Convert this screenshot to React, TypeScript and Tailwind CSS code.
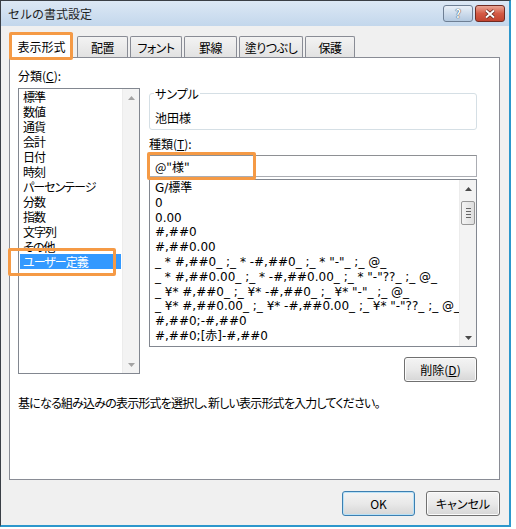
import React from "react";

const categories = [
  "標準",
  "数値",
  "通貨",
  "会計",
  "日付",
  "時刻",
  "パーセンテージ",
  "分数",
  "指数",
  "文字列",
  "その他",
  "ユーザー定義",
];

const formats = [
  "G/標準",
  "0",
  "0.00",
  "#,##0",
  "#,##0.00",
  '_ * #,##0_ ;_ * -#,##0_ ;_ * "-"_ ;_ @_ ',
  '_ * #,##0.00_ ;_ * -#,##0.00_ ;_ * "-"??_ ;_ @_ ',
  '_ ¥* #,##0_ ;_ ¥* -#,##0_ ;_ ¥* "-"_ ;_ @_ ',
  '_ ¥* #,##0.00_ ;_ ¥* -#,##0.00_ ;_ ¥* "-"??_ ;_ @_ ',
  "#,##0;-#,##0",
  "#,##0;[赤]-#,##0",
];

const Arrow = ({ up, color }: { up?: boolean; color: string }) => (
  <svg width="7" height="4" viewBox="0 0 7 4">
    <path d={up ? "M0 4 L3.5 0 L7 4 Z" : "M0 0 L3.5 4 L7 0 Z"} fill={color} />
  </svg>
);

const Button = ({
  children,
  primary,
  className = "",
}: {
  children: React.ReactNode;
  primary?: boolean;
  className?: string;
}) => (
  <div
    className={`h-[25px] flex items-center justify-center rounded-[3px] border bg-linear-to-b from-[#f4f4f4] via-[#e9e9e9] to-[#d6d6d6] text-[12px] text-black ${
      primary
        ? "border-[#3c7fb1] shadow-[inset_0_0_0_1px_#b8e1f7]"
        : "border-[#707070] shadow-[inset_0_0_0_1px_#fbfbfb]"
    } ${className}`}
  >
    {children}
  </div>
);

const tabClass =
  "h-[21px] flex items-center justify-center bg-linear-to-b from-[#f3f3f3] to-[#e2e2e2] border border-b-0 border-[#898c95] rounded-t-[2px] tracking-[-0.5px]";

const App = () => {
  return (
    <div className="w-[516px] h-[529px] bg-white font-['Noto_Sans_CJK_JP','Noto_Sans',sans-serif] text-black">
      <div className="w-[511px] h-[527px] flex flex-col border-l border-t border-[#3a3f46] border-r-2 border-r-[#2c97cc] border-b-2 border-b-[#2c97cc] bg-[#f0f0f0]">
        {/* Title bar */}
        <div className="h-[25px] flex items-start bg-linear-to-b from-[#dce8f5] to-[#c3d7ec]">
          <div className="pl-[7px] h-[25px] flex items-center text-[12px] leading-[15px] text-[#1e1e1e]">
            セルの書式設定
          </div>
          <div className="ml-auto mt-[4px] mr-[4px] flex gap-[2px]">
            <div className="w-[30px] h-[17px] flex items-center justify-center rounded-[3px] border border-[#6e7f94] bg-linear-to-b from-[#e9f0f8] to-[#b4c9e0] text-[11px] leading-none font-bold text-white [text-shadow:0_0_1px_#2d3b4b,0_0_1px_#2d3b4b]">
              ?
            </div>
            <div className="w-[30px] h-[17px] flex items-center justify-center rounded-[3px] border border-[#6f2b22] bg-linear-to-b from-[#e9a696] via-[#d45a45] to-[#c2432f]">
              <svg width="12" height="10" viewBox="0 0 12 10">
                <path d="M2 1.5 L10 8.5 M10 1.5 L2 8.5" stroke="#5a1f17" strokeWidth="3.4" />
                <path d="M2 1.5 L10 8.5 M10 1.5 L2 8.5" stroke="#ffffff" strokeWidth="2" />
              </svg>
            </div>
          </div>
        </div>

        {/* Body */}
        <div className="flex-1 flex flex-col pl-[8px] pr-[9px] pt-[7px] [font-feature-settings:'palt'] text-[12px] leading-[15px]">
          {/* Tabs */}
          <div className="relative h-[24px] flex items-end">
            <div className="relative z-10 -mb-px ml-[1px] w-[63px] h-[25px] flex items-center justify-center bg-white border border-b-0 border-[#898c95] rounded-t-[2px]">
              表示形式
            </div>
            <div className={`ml-[4px] w-[51px] ${tabClass}`}>配置</div>
            <div className={`ml-[2px] w-[52px] ${tabClass}`}>フォント</div>
            <div className={`ml-[2px] w-[53px] ${tabClass}`}>罫線</div>
            <div className={`ml-[2px] w-[64px] ${tabClass}`}>塗りつぶし</div>
            <div className={`ml-[2px] w-[50px] ${tabClass}`}>保護</div>
            {/* annotation */}
            <div className="absolute z-20 left-0 top-[-1px] w-[64px] h-[28px] border-[3px] border-[#f59a45] rounded-[2px]" />
          </div>

          {/* Panel */}
          <div className="relative h-[423px] flex flex-col bg-white border border-[#898c95] px-[8px] pt-[10px]">
            <div className="flex items-start">
              {/* Left: categories */}
              <div className="flex flex-col w-[122px]">
                <div>
                  分類(<span className="underline">C</span>):
                </div>
                <div className="mt-[5px] h-[286px] flex border border-[#828790] bg-white">
                  <div className="flex-1 flex flex-col px-px tracking-[-1px]">
                    {categories.map((c, i) => (
                      <div
                        key={c}
                        className={`h-[15px] pl-[3px] whitespace-nowrap ${
                          i === categories.length - 1 ? "bg-[#3399ff] text-white" : ""
                        }`}
                      >
                        {c}
                      </div>
                    ))}
                  </div>
                  <div className="w-[17px] flex flex-col justify-between bg-[#f3f3f3] border-l border-[#ececec]">
                    <div className="h-[17px] flex items-center justify-center">
                      <Arrow up color="#a3a3a3" />
                    </div>
                    <div className="h-[17px] flex items-center justify-center">
                      <Arrow color="#a3a3a3" />
                    </div>
                  </div>
                </div>
              </div>

              {/* Right: sample / type */}
              <div className="ml-[9px] w-[328px] flex flex-col mt-[18px]">
                <fieldset className="h-[44px] border border-[#d5dfe5] rounded-[3px] pl-[5px]">
                  <legend className="px-[1px] ml-[-1px]">サンプル</legend>
                  <div className="mt-[9px]">池田様</div>
                </fieldset>
                <div className="mt-[6px]">
                  種類(<span className="underline">T</span>):
                </div>
                <div className="mt-[4px] h-[22px] flex items-center border border-[#abadb3] border-t-[#8e9094] pl-[5px] bg-white">
                  @"様"
                </div>
                <div className="mt-[2px] h-[168px] flex border border-[#828790] bg-white">
                  <div className="flex-1 flex flex-col pt-px pl-[5px] overflow-hidden font-['DejaVu_Sans','Noto_Sans_CJK_JP',sans-serif] text-[12px] leading-[14.8px]">
                    {formats.map((f) => (
                      <div key={f} className="h-[14.8px] whitespace-pre">
                        {f}
                      </div>
                    ))}
                  </div>
                  <div className="w-[17px] flex flex-col bg-[#f3f3f3] border-l border-[#ececec]">
                    <div className="h-[17px] flex items-center justify-center">
                      <Arrow up color="#4a4a4a" />
                    </div>
                    <div className="mx-[1px] mt-[4px] h-[24px] flex flex-col items-center justify-center gap-[2px] rounded-[2px] border border-[#979797] bg-linear-to-r from-[#f4f4f4] to-[#dedede]">
                      <div className="w-[5px] h-px bg-[#666]" />
                      <div className="w-[5px] h-px bg-[#666]" />
                      <div className="w-[5px] h-px bg-[#666]" />
                      <div className="w-[5px] h-px bg-[#666]" />
                    </div>
                    <div className="mt-auto h-[17px] flex items-center justify-center">
                      <Arrow color="#4a4a4a" />
                    </div>
                  </div>
                </div>
                <div className="mt-[10px] flex justify-end">
                  <Button className="w-[73px]">
                    削除(<span className="underline">D</span>)
                  </Button>
                </div>
              </div>
            </div>

            <div className="mt-[13px] whitespace-nowrap tracking-[-0.8px]">
              基になる組み込みの表示形式を選択し、新しい表示形式を入力してください。
            </div>

            {/* annotations */}
            <div className="absolute left-[-2px] top-[190px] w-[108px] h-[28px] border-[3px] border-[#f59a45] rounded-[2px]" />
            <div className="absolute left-[137px] top-[94px] w-[109px] h-[28px] border-[3px] border-[#f59a45] rounded-[2px]" />
          </div>

          {/* Bottom buttons */}
          <div className="mt-[11px] flex justify-end gap-[11px]">
            <Button primary className="w-[73px]">
              OK
            </Button>
            <Button className="w-[74px]">キャンセル</Button>
          </div>
        </div>
      </div>
    </div>
  );
};

export default App;
